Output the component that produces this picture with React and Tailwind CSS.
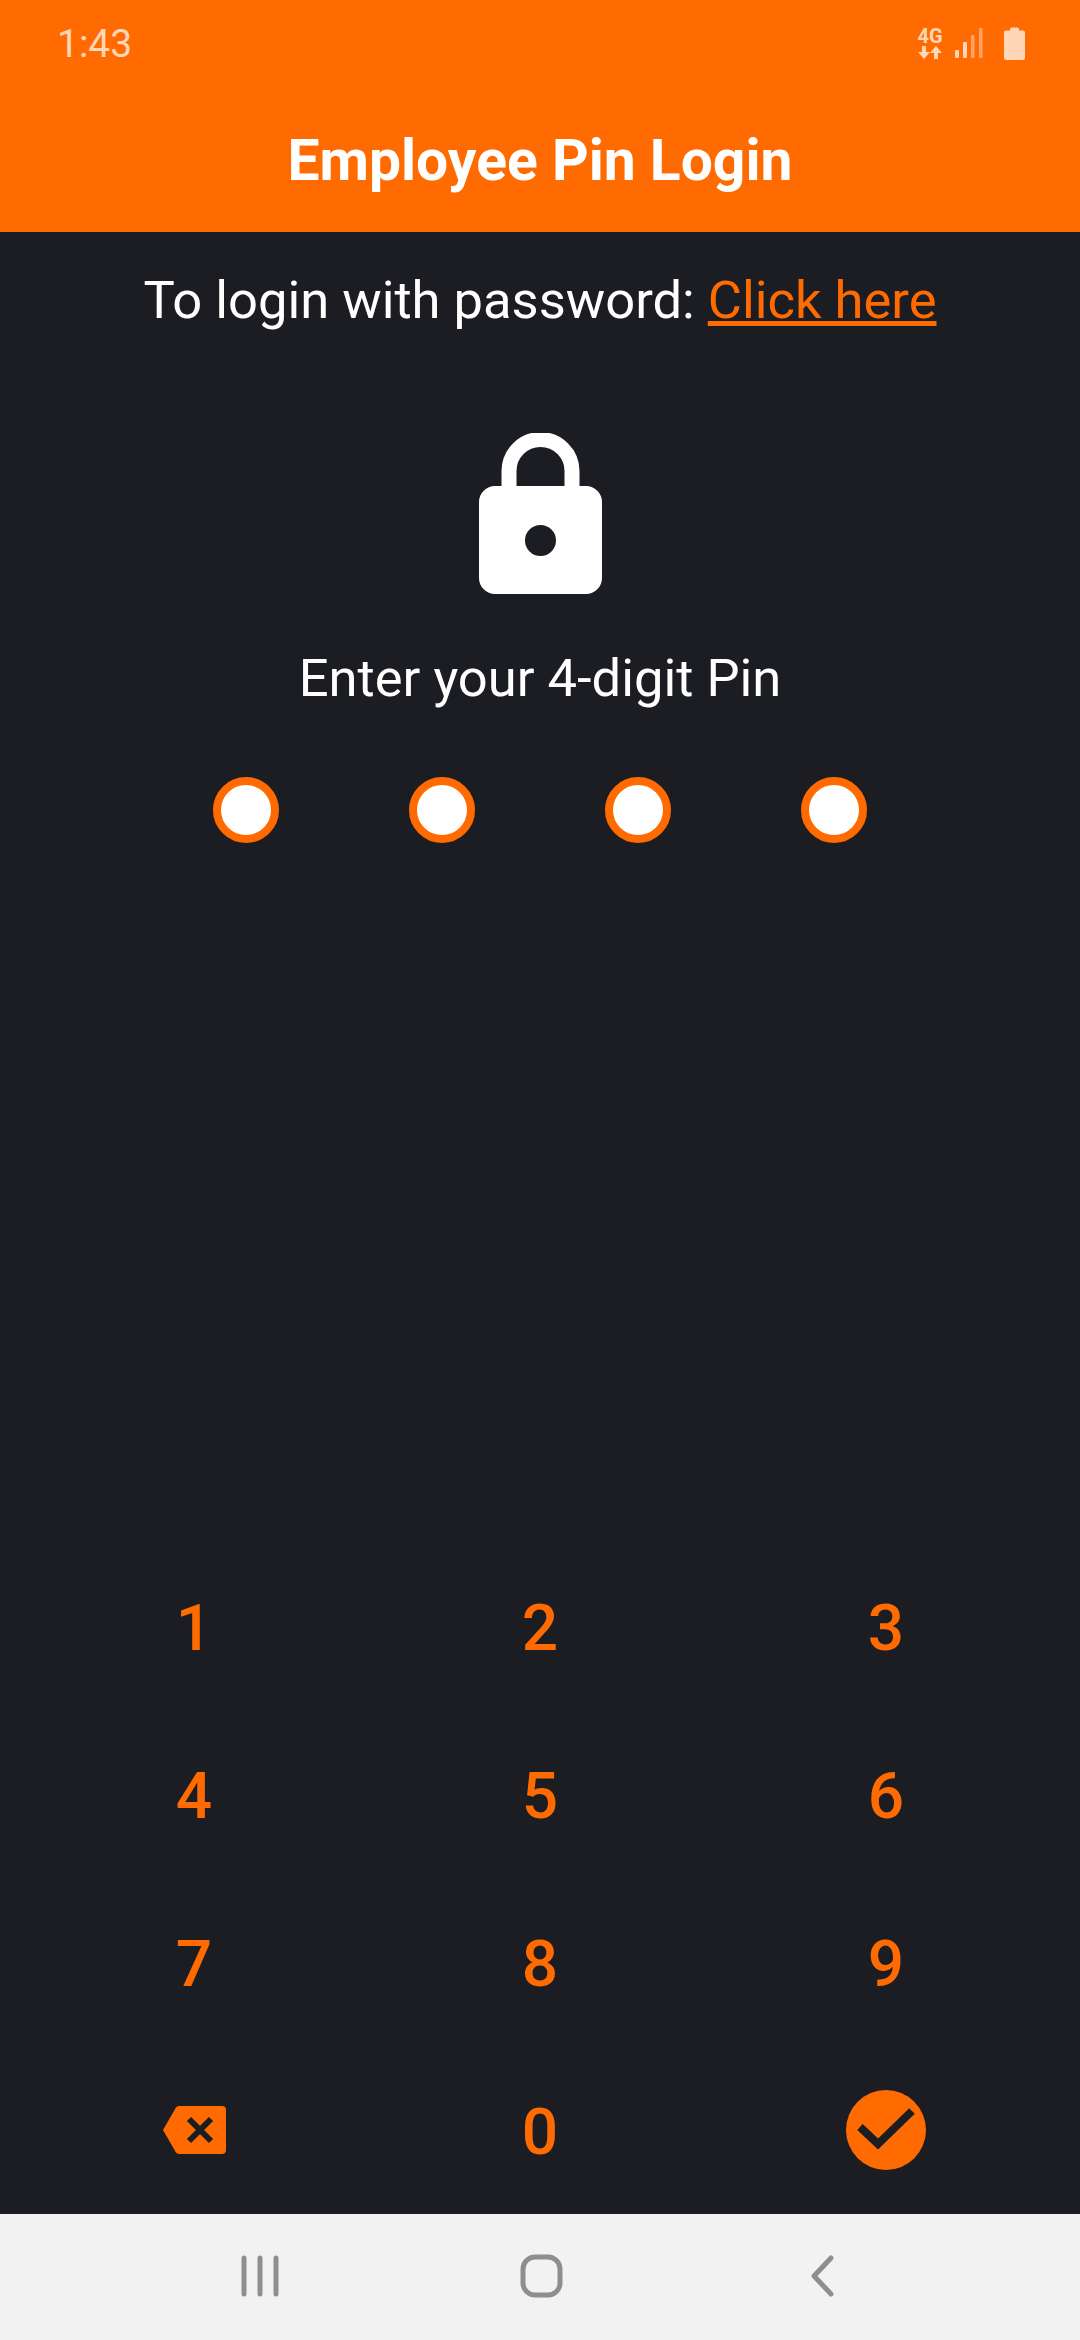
const ORANGE = '#ff6b00';

function Network() {
  return (
    <svg width="68" height="40" viewBox="0 -2 68 40" className="block">
      <text x="0.500" y="17" fontFamily="Roboto" fontWeight="700" fontSize="20" fill="#ffd6b8">4G</text>
      <path d="M7 33l-6-7h4v-6h4v6h4zM19 20l6 7h-4v6h-4v-6h-4z" fill="#ffd6b8" />
      <rect x="38" y="24" width="4" height="8" rx="1" fill="#ffd6b8" />
      <rect x="46" y="16" width="4" height="16" rx="1" fill="#ffd6b8" />
      <rect x="54" y="9" width="3.500" height="23" rx="1" fill="#ffa468" />
      <rect x="62" y="2" width="3.500" height="30" rx="1" fill="#ffa468" />
    </svg>
  );
}

function Battery() {
  return (
    <svg width="21" height="33" viewBox="0 0 21 33" className="mb-[2px] block">
      <path d="M6 3.500V2a1.500 1.500 0 0 1 1.500-1.500h6A1.500 1.500 0 0 1 15 2v1.500h4A2 2 0 0 1 21 5.500V31a2 2 0 0 1-2 2H2a2 2 0 0 1-2-2V5.500a2 2 0 0 1 2-2z" fill="#ffd6b8" />
    </svg>
  );
}

function Lock() {
  return (
    <svg width="123" height="161" viewBox="0 0 123 161" className="block">
      <path d="M30 60V38a31.500 31.500 0 0 1 63 0v22" fill="none" stroke="#fff" strokeWidth="15" />
      <path fillRule="evenodd" d="M16 53h91a16 16 0 0 1 16 16v76a16 16 0 0 1-16 16H16a16 16 0 0 1-16-16V69a16 16 0 0 1 16-16zM61.500 92a15.500 15.500 0 1 0 0 31 15.500 15.500 0 0 0 0-31z" fill="#fff" />
    </svg>
  );
}

function BackspaceIcon() {
  return (
    <svg width="63" height="48" viewBox="0 0 63 48">
      <path d="M16 0h43a4 4 0 0 1 4 4v40a4 4 0 0 1-4 4H16a4 4 0 0 1-3.200-1.700L0 24 12.800 1.700A4 4 0 0 1 16 0z" fill={ORANGE} />
      <path d="M26 13l22 22M48 13L26 35" stroke="#1c1d22" strokeWidth="6" fill="none" />
    </svg>
  );
}

function CheckIcon() {
  return (
    <svg width="80" height="80" viewBox="0 0 80 80">
      <circle cx="40" cy="40" r="40" fill={ORANGE} />
      <path d="M14 37l18 17 34-33" stroke="#1c1d22" strokeWidth="8" fill="none" />
    </svg>
  );
}

function Key({ children }) {
  return (
    <button className="flex h-[168px] items-center justify-center text-[64px] font-medium text-[#ff6b00]">
      {children}
    </button>
  );
}

export default function App() {
  return (
    <div className="flex h-[2340px] w-[1080px] flex-col overflow-hidden bg-[#1c1d22] font-['Roboto',sans-serif]">
      {/* Header with status bar */}
      <header className="h-[232px] shrink-0 bg-[#ff6b00]">
        <div className="flex h-[88px] items-center justify-between pl-[57px] pr-[55px]">
          <span className="text-[39px] leading-none text-[#ffd6b8]">1:43</span>
          <div className="flex items-center gap-[19px]">
            <Network />
            <Battery />
          </div>
        </div>
        <h1 className="mt-[37px] text-center text-[57px] leading-[72px] font-bold text-white">Employee Pin Login</h1>
      </header>

      <main className="flex flex-1 flex-col items-center">
        <p className="mt-[38px] text-[52.5px] leading-[60px] text-white">
          To login with password: <a className="text-[#ff6b00] underline">Click here</a>
        </p>
        <div className="mt-[103px]">
          <Lock />
        </div>
        <p className="mt-[56px] text-[52.5px] leading-[56px] text-white">Enter your 4-digit Pin</p>
        <div className="mt-[71px] flex gap-[130px]">
          {[0, 1, 2, 3].map((i) => (
            <div key={i} className="h-[66px] w-[66px] rounded-full border-[8px] border-[#ff6b00] bg-white" />
          ))}
        </div>

        {/* Keypad */}
        <div className="mt-auto grid w-full grid-cols-3 px-[21px]">
          {['1', '2', '3', '4', '5', '6', '7', '8', '9'].map((n) => (
            <Key key={n}><span className="pt-[5px]">{n}</span></Key>
          ))}
          <Key><BackspaceIcon /></Key>
          <Key><span className="pt-[5px]">0</span></Key>
          <Key><CheckIcon /></Key>
        </div>
      </main>

      {/* Android nav bar */}
      <nav className="relative flex h-[126px] shrink-0 items-center bg-[#f2f2f2]">
        <svg width="1080" height="126" viewBox="0 0 1080 126" fill="none" stroke="#8e8e8e" strokeLinecap="round">
          <path d="M244 44v36M260 44v36M276 44v36" strokeWidth="5" />
          <rect x="523" y="43" width="37" height="38" rx="12" strokeWidth="5" />
          <path d="M831 44l-17 18 17 18" strokeWidth="5" strokeLinejoin="round" />
        </svg>
      </nav>
    </div>
  );
}
